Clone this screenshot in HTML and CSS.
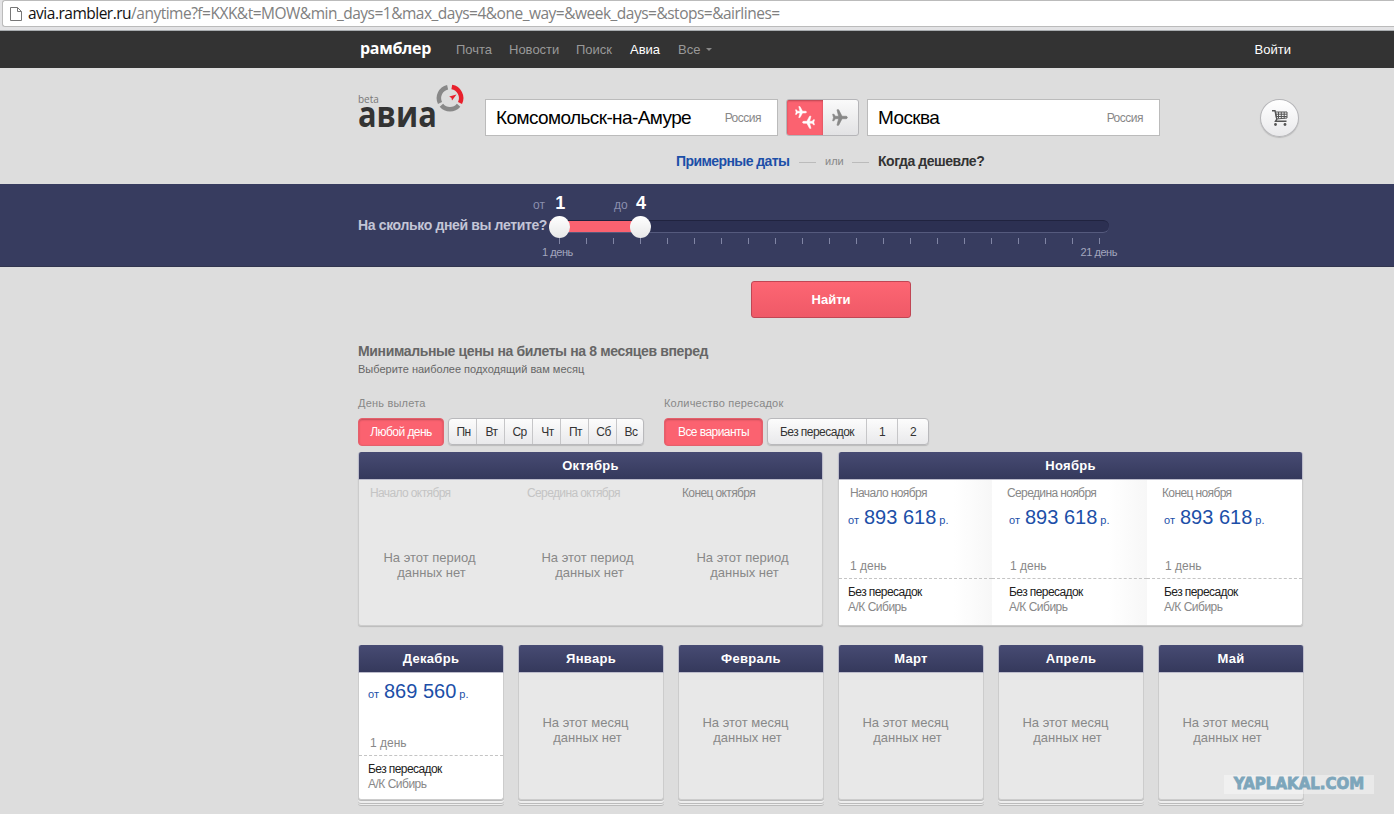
FILE: index.html
```html
<!DOCTYPE html>
<html lang="ru">
<head>
    <meta charset="UTF-8">
    <title>Рамблер Авиа</title>
    <link rel="stylesheet" href="styles.css">
</head>
<body>
    <div class="address">
        <div class="field">
            <svg width="12" height="16" viewBox="0 0 12 16" fill="#fff" stroke="#777"><path d="M.5 1.500h7l4 4v9H.5zM7.500 1.500v4h4"/></svg>
            <p class="url"><b>avia.rambler.ru</b>/anytime?f=KXK&amp;t=MOW&amp;min_days=1&amp;max_days=4&amp;one_way=&amp;week_days=&amp;stops=&amp;airlines=</p>
        </div>
    </div>

    <div class="topbar">
        <div class="wrap">
            <a class="brand">рамблер</a>
            <a class="n1">Почта</a>
            <a class="n2">Новости</a>
            <a class="n3">Поиск</a>
            <a class="n4 active">Авиа</a>
            <a class="n5">Все</a>
            <i class="caret"></i>
            <a class="login">Войти</a>
        </div>
    </div>

    <div class="search wrap">
        <div class="row">
            <div class="logo">
                <div class="word"><small>beta</small><span>авиа</span></div>
                <svg width="28" height="28" viewBox="0 0 28 28" fill="none" stroke-width="4.500">
                    <path stroke="#888" d="M11.600 3.200A11.200 11.200 0 0 0 4 19"/>
                    <path stroke="#888" d="M5.400 21.200A11.200 11.200 0 0 0 22.600 21.200"/>
                    <path stroke="#e8202c" d="M15.800 3A11.200 11.200 0 0 1 24 19"/>
                    <path fill="#e8202c" stroke="none" d="M20.500 10.500L16 16.500l-.5-2.600-2.300-1.400z"/>
                </svg>
            </div>
            <div class="city"><span>Комсомольск-на-Амуре</span><small>Россия</small></div>
            <div class="switch">
                <div class="both">
                    <svg width="22" height="26" viewBox="0 0 22 26" fill="#fff" stroke="#fff">
                        <path transform="translate(1 1) scale(.5 .58)" d="M23 10.500c0 1-1 1.500-2.500 1.500H15l-5 8H7.500L10 12H5l-2 2.500H1L2.300 10.500 1 6.500h2L5 9h5L7.500 1H10l5 8h5.500c1.500 0 2.500.5 2.500 1.500z"/>
                        <path transform="translate(21 24) scale(-.54 -.64)" d="M23 10.500c0 1-1 1.500-2.500 1.500H15l-5 8H7.500L10 12H5l-2 2.500H1L2.300 10.500 1 6.500h2L5 9h5L7.500 1H10l5 8h5.500c1.500 0 2.500.5 2.500 1.500z"/>
                    </svg>
                </div>
                <div class="single">
                    <svg width="16" height="17" viewBox="0 0 24 21" preserveAspectRatio="none" fill="#888" stroke="#888"><path d="M23 10.500c0 1-1 1.500-2.500 1.500H15l-5 8H7.500L10 12H5l-2 2.500H1L2.300 10.500 1 6.500h2L5 9h5L7.500 1H10l5 8h5.500c1.500 0 2.500.5 2.500 1.500z"/></svg>
                </div>
            </div>
            <div class="city"><span>Москва</span><small>Россия</small></div>
            <div class="cart">
                <svg width="18" height="18" viewBox="0 0 18 18" fill="none" stroke="#555">
                    <path stroke-width="1.400" d="M1 1.700h3l1.800 8.500L4.500 12.300h11"/>
                    <path d="M4.500 3h11.500v6L5.600 10zM5 5.200h11M5.400 7.500h10.500M7.500 3v6.500M10.300 3v6.500M13.200 3v6.500"/>
                    <g fill="#555" stroke="none"><circle cx="4.500" cy="15.500" r="1.400"/><circle cx="14" cy="15.500" r="1.400"/></g>
                </svg>
            </div>
        </div>
        <div class="modes">
            <a>Примерные даты</a><i></i><small>или</small><i></i><b>Когда дешевле?</b>
        </div>
    </div>

    <div class="band">
        <div class="wrap">
            <h3>На сколько дней вы летите?</h3>
            <div class="slider">
                <div class="values">
                    <p>от <b>1</b></p>
                    <p>до <b>4</b></p>
                </div>
                <div class="track">
                    <div class="range"></div>
                    <div class="handle from"></div>
                    <div class="handle to"></div>
                </div>
                <div class="ticks"><i></i><i></i><i></i><i></i><i></i><i></i><i></i><i></i><i></i><i></i><i></i><i></i><i></i><i></i><i></i><i></i><i></i><i></i><i></i><i></i><i></i></div>
                <div class="limits"><span>1 день</span><span>21 день</span></div>
            </div>
        </div>
    </div>

    <div class="wrap">
        <button class="find">Найти</button>
        <h2>Минимальные цены на билеты на 8 месяцев вперед</h2>
        <p class="hint">Выберите наиболее подходящий вам месяц</p>

        <div class="filters">
            <div class="days">
                <h4>День вылета</h4>
                <div class="buttons">
                    <div class="on">Любой день</div>
                    <div class="group"><span>Пн</span><span>Вт</span><span>Ср</span><span>Чт</span><span>Пт</span><span>Сб</span><span>Вс</span></div>
                </div>
            </div>
            <div class="stops">
                <h4>Количество пересадок</h4>
                <div class="buttons">
                    <div class="on">Все варианты</div>
                    <div class="group"><span>Без пересадок</span><span>1</span><span>2</span></div>
                </div>
            </div>
        </div>

        <div class="months big">
            <div class="month empty">
                <h5>Октябрь</h5>
                <div class="parts">
                    <div class="part"><h6 class="past">Начало октября</h6><p class="none">На этот период<span>данных нет</span></p></div>
                    <div class="part"><h6 class="past">Середина октября</h6><p class="none">На этот период<span>данных нет</span></p></div>
                    <div class="part"><h6>Конец октября</h6><p class="none">На этот период<span>данных нет</span></p></div>
                </div>
            </div>
            <div class="month">
                <h5>Ноябрь</h5>
                <div class="parts">
                    <div class="part">
                        <h6>Начало ноября</h6>
                        <p class="price">от <b>893 618</b> р.</p>
                        <p class="len">1 день</p>
                        <p class="direct">Без пересадок</p>
                        <p class="air">А/К Сибирь</p>
                    </div>
                    <div class="part">
                        <h6>Середина ноября</h6>
                        <p class="price">от <b>893 618</b> р.</p>
                        <p class="len">1 день</p>
                        <p class="direct">Без пересадок</p>
                        <p class="air">А/К Сибирь</p>
                    </div>
                    <div class="part">
                        <h6>Конец ноября</h6>
                        <p class="price">от <b>893 618</b> р.</p>
                        <p class="len">1 день</p>
                        <p class="direct">Без пересадок</p>
                        <p class="air">А/К Сибирь</p>
                    </div>
                </div>
            </div>
        </div>

        <div class="months small">
            <div class="month">
                <h5>Декабрь</h5>
                <div class="part">
                    <p class="price">от <b>869 560</b> р.</p>
                    <p class="len">1 день</p>
                    <p class="direct">Без пересадок</p>
                    <p class="air">А/К Сибирь</p>
                </div>
            </div>
            <div class="month empty"><h5>Январь</h5><p class="none">На этот месяц<span>данных нет</span></p></div>
            <div class="month empty"><h5>Февраль</h5><p class="none">На этот месяц<span>данных нет</span></p></div>
            <div class="month empty"><h5>Март</h5><p class="none">На этот месяц<span>данных нет</span></p></div>
            <div class="month empty"><h5>Апрель</h5><p class="none">На этот месяц<span>данных нет</span></p></div>
            <div class="month empty"><h5>Май</h5><p class="none">На этот месяц<span>данных нет</span></p></div>
        </div>
    </div>

    <div class="watermark">YAPLAKAL.COM</div>
</body>
</html>
```
FILE: styles.css
```css
* {
    box-sizing: border-box;
    margin: 0;
    padding: 0;
}

body {
    position: relative;
    height: 814px;
    overflow: hidden;
    background: #ddd;
    font-family: "Liberation Sans", Arial, sans-serif;
    font-size: 12px;
    color: #333;
    white-space: nowrap;
}

.wrap {
    width: 945px;
    margin-left: 358px;
}

/* browser address line */
.address {
    height: 31px;
    padding-left: 2px;
    background: #e3e3e5;
    border-bottom: 1px solid #a9adb0;
}

.field {
    display: flex;
    align-items: center;
    height: 27px;
    padding-left: 7px;
    background: #fff;
    border: 1px solid #bbb;
    border-right: none;
    border-radius: 3px 0 0 3px;
}

.url {
    margin: -2px 0 0 6px;
    font-family: "Open Sans", sans-serif;
    font-size: 15.5px;
    letter-spacing: -.5px;
    color: #808080;
}

.url b {
    font-weight: normal;
    color: #111;
}

/* top navigation */
.topbar {
    height: 37px;
    background: #333;
}

.topbar .wrap {
    display: flex;
    align-items: center;
    height: 37px;
    font-size: 13px;
    color: #999;
}

.brand {
    width: 98px;
    padding-left: 2px;
    margin-top: -3px;
    font: bold 16px "Open Sans", sans-serif;
    letter-spacing: -.3px;
    color: #fff;
}

.n1 { width: 53px; }
.n2 { width: 67px; }
.n3 { width: 54px; }
.n4 { width: 48px; }
.n5 { width: 28px; }

.active,
.login {
    color: #fff;
}

.caret {
    border: 3px solid transparent;
    border-top-color: #888;
    border-bottom: none;
}

.login {
    margin-left: auto;
    padding-right: 12px;
}

/* search form */
.search {
    height: 116px;
}

.row {
    display: flex;
    padding-top: 31px;
    height: 68px;
}

.logo {
    display: flex;
    width: 127px;
    margin-top: -15px;
}

.word {
    width: 78px;
    padding-top: 9px;
    font-family: "Open Sans", sans-serif;
}

.word small {
    display: block;
    height: 9px;
    font-size: 10px;
    line-height: 12px;
    color: #777;
}

.word span {
    display: block;
    font-size: 35px;
    font-weight: bold;
    line-height: 24px;
    transform: scaleX(.88);
    transform-origin: left;
}

.city {
    display: flex;
    justify-content: space-between;
    align-items: center;
    width: 293px;
    height: 37px;
    padding: 0 16px 0 10px;
    background: #fff;
    border: 1px solid #bbb;
    font-size: 19px;
    letter-spacing: -.6px;
    color: #000;
}

.city small {
    font-size: 12px;
    letter-spacing: -.5px;
    color: #888;
}

.switch {
    display: flex;
    width: 73px;
    height: 37px;
    margin: 0 8px;
    border: 1px solid #b5b5b8;
    border-radius: 3px;
    background: linear-gradient(#fafafa, #e2e2e4);
    overflow: hidden;
}

.both,
.single {
    display: flex;
    align-items: center;
    justify-content: center;
    width: 36px;
}

.both {
    background: #fb6270;
    box-shadow: inset 0 1px 2px #b84450;
}

.cart {
    display: flex;
    align-items: center;
    justify-content: center;
    width: 39px;
    height: 38px;
    margin-left: 100px;
    border: 1px solid #b5b5b8;
    border-radius: 50%;
    background: linear-gradient(#fff, #e9e9eb);
    box-shadow: 0 1px 1px #bbb;
}

.modes {
    display: flex;
    align-items: center;
    height: 50px;
    padding: 0 0 0 318px;
    font-size: 14px;
    font-weight: bold;
    letter-spacing: -.45px;
}

.modes a {
    width: 114px;
    letter-spacing: -.58px;
    color: #1c4fa8;
}

.modes i {
    width: 17px;
    height: 1px;
    margin: 2px 9px 0;
    background: #bbb;
}

.modes small {
    width: 18px;
    font-size: 11px;
    font-weight: normal;
    letter-spacing: 0;
    color: #888;
}

/* trip length */
.band {
    height: 83px;
    background: #373c5f;
    border-bottom: 1px solid #31354f;
}

.band .wrap {
    display: flex;
}

.band h3 {
    width: 192px;
    padding-top: 33px;
    font-size: 14px;
    line-height: 16px;
    letter-spacing: -.36px;
    color: #c3c5d6;
}

.slider {
    width: 559px;
}

.values {
    display: flex;
    height: 36px;
    padding-top: 8px;
    margin-left: -17px;
    font-size: 12px;
    line-height: 22px;
    color: #8b8fae;
}

.values p {
    width: 81px;
}

.values b {
    margin-left: 7px;
    font-size: 18px;
    color: #fff;
}

.values p:last-child b {
    margin-left: 5px;
}

.track {
    position: relative;
    height: 13px;
    border-radius: 2px 6px 6px 2px;
    background: #2c3052;
    border-top: 1px solid #20233f;
    border-bottom: 1px solid #555a7d;
}

.range {
    width: 90px;
    height: 11px;
    background: #fb6270;
}

.handle {
    position: absolute;
    top: -5px;
    width: 21px;
    height: 22px;
    border-radius: 50%;
    background: linear-gradient(#fff, #e8e8e8);
}

.from { left: -1px; }
.to { left: 80px; }

.ticks {
    display: flex;
    justify-content: space-between;
    width: 541px;
    margin: 5px 0 0 9px;
}

.ticks i {
    width: 1px;
    height: 6px;
    background: #8085a4;
}

.limits {
    display: flex;
    justify-content: space-between;
    margin: 2px -8px 0 -8px;
    font-size: 11px;
    letter-spacing: -.45px;
    color: #a3a6be;
}

/* results */
.find {
    display: block;
    width: 160px;
    height: 37px;
    margin: 14px 0 0 393px;
    border: 1px solid #c04654;
    border-radius: 3px;
    background: linear-gradient(#fd6673, #ef5967);
    font: bold 13px "Liberation Sans", Arial, sans-serif;
    color: #fff;
}

h2 {
    margin-top: 25px;
    font-size: 14px;
    line-height: 16px;
    letter-spacing: -.36px;
    color: #666;
}

.hint {
    margin-top: 3px;
    font-size: 11px;
    line-height: 14px;
    color: #666;
}

.filters {
    display: flex;
    margin-top: 20px;
}

.days {
    width: 306px;
}

.filters h4 {
    font-size: 11px;
    font-weight: normal;
    line-height: 14px;
    letter-spacing: .2px;
    color: #888;
}

.buttons {
    display: flex;
    gap: 4px;
    margin-top: 8px;
    height: 28px;
    line-height: 26px;
    letter-spacing: -.55px;
    text-align: center;
}

.on {
    width: 86px;
    border-radius: 4px;
    background: #fb6270;
    border: 1px solid #e5606c;
    box-shadow: inset 0 1px 2px #c04c58;
    color: #fff;
}

.stops .on {
    width: 99px;
}

.group {
    display: flex;
    height: 27px;
    border: 1px solid #b9b9bc;
    border-radius: 4px;
    background: linear-gradient(#fcfcfc, #e9e9eb);
    box-shadow: 0 1px 1px #bbb;
}

.group span {
    width: 28px;
    border-right: 1px solid #c6c6c8;
}

.group span:last-child {
    border-right: none;
}

.days .group span {
    padding-left: 2px;
}

.days .group span:last-child {
    width: 26px;
}

.stops .group span {
    width: 31px;
}

.stops .group span:first-child {
    width: 99px;
}

.stops .group span:last-child {
    width: 30px;
}

.months {
    display: flex;
    gap: 15px;
    margin-top: 6px;
}

.month {
    flex-shrink: 0;
    width: 465px;
    height: 174px;
    border: 1px solid #ccc;
    border-top: none;
    border-radius: 3px;
    background: #fff;
    box-shadow: 0 1px 1px #bbb;
}

.empty {
    background: #e8e8e8;
}

h5 {
    height: 28px;
    margin: 0 -1px;
    border: 1px solid #bcbccb;
    border-top: none;
    border-radius: 3px 3px 0 0;
    background: linear-gradient(#474b73, #35395c);
    font-size: 13px;
    line-height: 27px;
    letter-spacing: .3px;
    text-align: center;
    color: #fff;
}

.parts {
    display: flex;
}

.part {
    width: 155px;
    height: 145px;
    padding: 4px 0 0 17px;
    background: linear-gradient(to right, #fff 75%, #f7f7f7);
}

.parts .part:first-child {
    padding-left: 9px;
    width: 153px;
}

.part:last-child,
.empty .part {
    background: none;
}

h6 {
    height: 19px;
    margin-left: -2px;
    font-size: 12px;
    font-weight: normal;
    line-height: 18px;
    letter-spacing: -.62px;
    color: #888;
}

.part:first-child h6 {
    margin-left: 2px;
}

.past {
    color: #c4c4c4;
}

.price {
    height: 29px;
    font-size: 11px;
    line-height: 29px;
    color: #1c4fa8;
}

.price b {
    margin-left: 2px;
    font-size: 20px;
    font-weight: normal;
}

.len {
    height: 47px;
    padding: 27px 0 0 2px;
    margin-left: -17px;
    padding-left: 18px;
    border-bottom: 1px dashed #c4c4c4;
    line-height: 15px;
    color: #888;
}

.parts .part:first-child .len,
.small .len {
    margin-left: -9px;
    padding-left: 11px;
}

.direct {
    margin-top: 6px;
    line-height: 15px;
    letter-spacing: -.58px;
    color: #222;
}

.air {
    line-height: 15px;
    letter-spacing: -.5px;
    color: #888;
}

.none {
    font-size: 13px;
    line-height: 15px;
    text-align: center;
    color: #888;
}

.none span {
    display: block;
    padding-left: 4px;
}

.big .none {
    margin: 47px 14px 0 -7px;
}

.big .part:first-child .none {
    margin: 47px 12px 0 -9px;
}

.small {
    gap: 14px;
    margin-top: 19px;
}

/* cards lying as a pile */
.small .month {
    width: 146px;
    height: 155px;
    box-shadow: 0 1px #bbb, 0 3px #eee, 0 4px #bbb, 0 5px #eee, 0 6px #bbb;
}

.small .none {
    margin: 42px 11px 0 0;
}

.small .part {
    width: auto;
    height: 126px;
    padding: 4px 0 0 9px;
    background: none;
}

.small .len {
    height: 50px;
    padding-top: 30px;
}

.watermark {
    position: absolute;
    left: 1224px;
    top: 775px;
    width: 150px;
    height: 19px;
    background: rgba(255, 255, 255, .35);
    font: bold 15px/19px "DejaVu Sans", sans-serif;
    -webkit-text-stroke: .8px #7da6bb;
    text-align: center;
    color: #7da6bb;
}
```
